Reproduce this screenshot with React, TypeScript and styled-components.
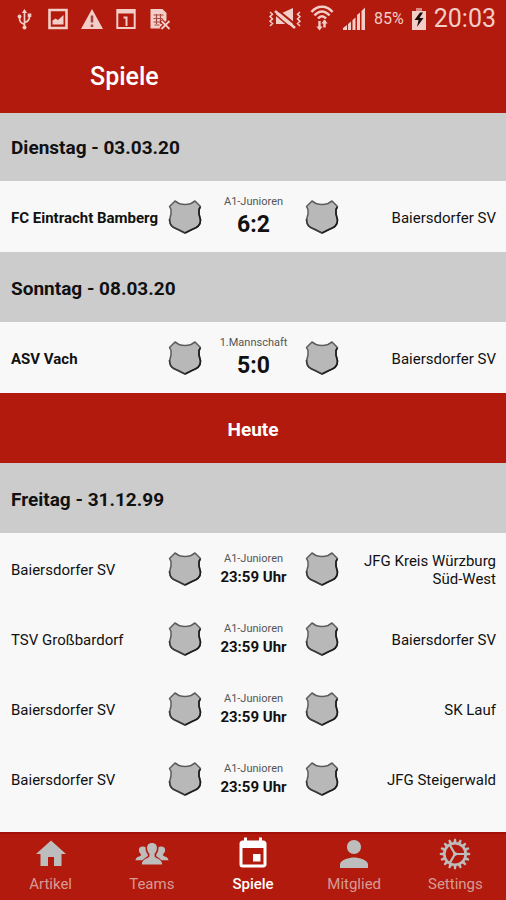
import React from 'react';
import styled, { createGlobalStyle } from 'styled-components';
import { MdHome, MdEvent, MdPerson } from 'react-icons/md';

const RED = '#b11a0c';
const STATUS = '#f3cdc8';

const GlobalStyle = createGlobalStyle`
  * { box-sizing: border-box; }
  body { margin: 0; background: #f8f8f8; font-family: Roboto, sans-serif; color: #111; }
  h1, h2, p { margin: 0; }
`;

const Screen = styled.div`
  display: flex;
  flex-direction: column;
  min-height: 100vh;
`;

const Top = styled.header`
  position: relative;
  z-index: 1;
  background: ${RED};
`;

const StatusBar = styled.div`
  display: flex;
  justify-content: space-between;
  align-items: center;
  height: 38px;
  padding: 0 10px 0 12px;
  color: ${STATUS};
`;

const StatusGroup = styled.div<{ $gap: number }>`
  display: flex;
  align-items: center;
  gap: ${(p) => p.$gap}px;
  svg { display: block; flex: none; }
`;

const Percent = styled.span`
  font-size: 16px;
  line-height: 20px;
`;

const Clock = styled.span`
  font-size: 25px;
  line-height: 38px;
`;

const Title = styled.h1`
  padding: 2px 90px 0;
  font-size: 25px;
  font-weight: 500;
  line-height: 73px;
  color: #fff;
`;

const List = styled.main`
  flex: 1;
  margin-top: -2px;
`;

const DayHeading = styled.h2`
  display: flex;
  align-items: center;
  min-height: 70px;
  padding: 2px 11px 0;
  background: #ccc;
  font-size: 19px;
  font-weight: 700;
`;

const TodayBar = styled.div`
  display: flex;
  align-items: center;
  justify-content: center;
  min-height: 70px;
  padding-top: 2px;
  background: ${RED};
  color: #fff;
  font-size: 19px;
  font-weight: 700;
`;

const Fixtures = styled.div`
  padding-top: 1px;
`;

const Match = styled.article`
  display: grid;
  grid-template-columns: 1fr 34px 103px 34px 1fr;
  align-items: center;
  min-height: 70px;
  padding: 0 10px 0 11px;
  svg { display: block; }
`;

const Team = styled.p<{ $away?: boolean; $winner?: boolean }>`
  font-size: 15px;
  line-height: 18px;
  font-weight: ${(p) => (p.$winner ? 700 : 400)};
  text-align: ${(p) => (p.$away ? 'right' : 'left')};
  padding-top: 2px;
`;

const Middle = styled.div`
  text-align: center;
`;

const League = styled.p`
  font-size: 11px;
  line-height: 16px;
  color: #555;
`;

const Result = styled.p<{ $time?: boolean }>`
  font-size: ${(p) => (p.$time ? 15 : 23)}px;
  line-height: ${(p) => (p.$time ? 20 : 30)}px;
  font-weight: 700;
`;

const TabBar = styled.nav`
  display: grid;
  grid-template-columns: repeat(5, 1fr);
  height: 68px;
  border-top: 2px solid #a3100a;
  background: ${RED};
`;

const Tab = styled.a<{ $active?: boolean }>`
  display: flex;
  flex-direction: column;
  align-items: center;
  color: ${(p) => (p.$active ? '#fff' : '#d79a95')};
  font-size: 15px;
  line-height: 20px;
  font-weight: ${(p) => (p.$active ? 500 : 400)};
  text-decoration: none;
`;

const TabIcon = styled.span<{ $active?: boolean }>`
  display: flex;
  align-items: center;
  justify-content: center;
  height: 40px;
  color: ${(p) => (p.$active ? '#fff' : '#bdbdbd')};
  svg { display: block; flex: none; }
`;

const Shield = () => (
  <svg width="34" height="34" viewBox="0 0 34 34" aria-hidden="true">
    <path
      d="M7 1L11 3.500C15 4.800 19 4.800 23 3.500L27 1L32.500 6.500L31 9.500L31 14L32.500 20C32.500 26 29 27.500 24 29.500L17 33L10 29.500C5 27.500 1.500 26 1.500 20L3 14L3 9.500L1.500 6.500Z"
      fill="#b8b8b8"
      stroke="#5c5c5c"
      strokeWidth="1.500"
      strokeLinejoin="round"
    />
    <path d="M32.300 7L31 9.500L31 14L32.500 20C32.500 26 29 27.500 24 29.500L17 33" fill="none" stroke="#1d1d1d" strokeWidth="1.700" />
    <path d="M1.500 19C1.500 26 5 27.500 10 29.500L17 33" fill="none" stroke="#3a3a3a" strokeWidth="1.500" />
  </svg>
);

const UsbIcon = () => (
  <svg width="24" height="24" viewBox="0 0 24 24" fill="none" stroke="currentColor" strokeWidth="1.700" aria-hidden="true">
    <path d="M12.500 5v15M12.500 17.500C8 16 7.500 14 7.500 10M12.500 15.500C17 14.500 17.500 12 17.500 9" />
    <path d="M9.800 6l2.700-4 2.700 4z" fill="currentColor" stroke="none" />
    <circle cx="12.500" cy="20.500" r="2" fill="currentColor" stroke="none" />
    <circle cx="7.500" cy="9.500" r="1.900" fill="currentColor" stroke="none" />
    <path d="M15.700 6.500h3.600v3.600h-3.600z" fill="currentColor" stroke="none" />
  </svg>
);

const PictureIcon = () => (
  <svg width="24" height="24" viewBox="0 0 24 24" fill="none" aria-hidden="true">
    <path d="M3.500 3h17v18h-17z" stroke="currentColor" strokeWidth="2.600" />
    <path d="M6.500 17.500v-4l3-2 2.500 1.500 5.500-5v9.500z" fill="currentColor" />
  </svg>
);

const WarningIcon = () => (
  <svg width="24" height="24" viewBox="0 0 24 24" aria-hidden="true">
    <path d="M12 2L23 22H1z" fill="currentColor" />
    <path d="M12 8.500v7M12 17.500v2.500" stroke="#a0443c" strokeWidth="2.500" />
  </svg>
);

const CalendarOneIcon = () => (
  <svg width="24" height="24" viewBox="0 0 24 24" fill="none" stroke="currentColor" aria-hidden="true">
    <path d="M3.300 3h17.400v18H3.300z" strokeWidth="2" />
    <path d="M3 4.500h18" strokeWidth="4" />
    <path d="M9.500 10.500h3V19" strokeWidth="2" />
  </svg>
);

const FileErrorIcon = () => (
  <svg width="24" height="24" viewBox="0 0 24 24" fill="none" aria-hidden="true">
    <path d="M2.500 2h12l4 4v8l-5 7.500h-11z" fill="currentColor" />
    <path d="M5.500 8h10M5.500 11.500h9M5.500 15h7M6.500 18h5M8.500 7v10M12.500 7v10" stroke="#a84a42" strokeWidth="1.200" />
    <path d="M13 13.500l8.500 8.500M21.500 13.500L13 22" stroke={RED} strokeWidth="4" />
    <path d="M13.500 14l8 8M21.500 14l-8 8" stroke="currentColor" strokeWidth="1.800" />
  </svg>
);

const MuteIcon = () => (
  <svg width="34" height="24" viewBox="0 0 34 24" fill="none" stroke="currentColor" aria-hidden="true">
    <path d="M2 5l2.500 2.300L2 9.600l2.500 2.300L2 14.200l2.500 2.300L2 19M32 5l-2.500 2.300L32 9.600l-2.500 2.300 2.500 2.300-2.500 2.300L32 19" strokeWidth="1.500" />
    <path d="M8 6h6l11-5v18l-7-2H8z" fill="currentColor" stroke="none" />
    <path d="M9 2.500l19 15.500" stroke={RED} strokeWidth="2.200" />
    <path d="M7 4l20 17" strokeWidth="2.600" />
    <path d="M6 6.500l17 14.500" stroke={RED} strokeWidth="1.600" />
  </svg>
);

const WifiIcon = () => (
  <svg width="24" height="28" viewBox="0 0 24 28" fill="none" stroke="currentColor" aria-hidden="true">
    <path d="M1.500 7C7 0 17 0 22.500 7M4.500 10.500C9 5 15 5 19.500 10.500M8 13.500C10.500 10.500 13.500 10.500 16 13.500" strokeWidth="2.500" />
    <path d="M9.500 16v8M14.500 15.500v7" strokeWidth="2.400" />
    <path d="M6.300 21.500h6.400l-3.200 4zM11.300 18.500h6.400l-3.200-4z" fill="currentColor" stroke="none" />
  </svg>
);

const SignalIcon = () => (
  <svg width="24" height="24" viewBox="0 0 24 24" fill="currentColor" aria-hidden="true">
    <path d="M1 23v-2l4-3v5zM6 23v-6l3-2.500V23zM10.500 23V13l3-2.500V23zM15 23V8l3-2.500V23zM19.500 23V4L23 .5V23z" />
  </svg>
);

const BatteryIcon = () => (
  <svg width="14" height="24" viewBox="0 0 14 24" aria-hidden="true">
    <path d="M4 1h6v3H4z" fill="#d9877f" />
    <path d="M0 4h14v19H0z" fill="currentColor" />
    <path d="M8 5.500L2.500 13h4l-1.500 7 6.500-9H7.500L11 5.500z" fill="#1c0c0a" />
  </svg>
);

const TeamsIcon = () => (
  <svg width="34" height="34" viewBox="0 0 34 34" fill="currentColor" aria-hidden="true">
    <path d="M17 6c3.600 0 5.200 2.300 4.900 5.600-.2 2.600-1.200 4-2.300 5.200v2.400c0 2.200 7.600 2 7.600 8.300H6.800c0-6.300 7.600-6.100 7.600-8.300v-2.400c-1.100-1.200-2.100-2.600-2.300-5.200C11.800 8.300 13.400 6 17 6z" />
    <path d="M8 9.500c1 0 2 .3 2.600.8-.3 3.200.8 5.500 2.200 7.300v1.600c-1 .8-3.500 1.500-5.200 4.100H.5c.3-4 5.400-3.500 5.400-5v-1.200C4.500 15.800 4 14.800 3.900 13.200c-.2-2.200 1.200-3.700 4.100-3.700z" />
    <path d="M26 9.500c-1 0-2 .3-2.600.8.3 3.200-.8 5.500-2.200 7.300v1.600c1 .8 3.500 1.500 5.200 4.100h7.100c-.3-4-5.400-3.500-5.400-5v-1.200c1.400-1.300 1.900-2.300 2-3.900.2-2.200-1.200-3.700-4.100-3.700z" />
  </svg>
);

const TEETH = Array.from({ length: 16 }, (_, i) => i * 22.5);

const GearIcon = () => (
  <svg width="32" height="32" viewBox="-16 -16 32 32" fill="none" stroke="currentColor" aria-hidden="true">
    <circle r="10.700" strokeWidth="2.600" />
    {TEETH.map((a) => (
      <path key={a} d="M-1.600 -11.500L-.9 -15.200H.9L1.600 -11.500Z" fill="currentColor" stroke="none" transform={`rotate(${a})`} />
    ))}
    <path d="M0 0H10.500M0 0L-5.300 -9.100M0 0L-5.300 9.100" strokeWidth="2.200" />
    <circle r="2" fill="currentColor" stroke="none" />
  </svg>
);

type Fixture = { home: string; away: string; league: string; result: string; played?: boolean };
type MatchDay = { day: string; fixtures: Fixture[] };

const UHR = '23:59 Uhr';
const past: MatchDay[] = [
  { day: 'Dienstag - 03.03.20', fixtures: [{ home: 'FC Eintracht Bamberg', away: 'Baiersdorfer SV', league: 'A1-Junioren', result: '6:2', played: true }] },
  { day: 'Sonntag - 08.03.20', fixtures: [{ home: 'ASV Vach', away: 'Baiersdorfer SV', league: '1.Mannschaft', result: '5:0', played: true }] },
];
const upcoming: MatchDay[] = [
  {
    day: 'Freitag - 31.12.99',
    fixtures: [
      { home: 'Baiersdorfer SV', away: 'JFG Kreis Würzburg Süd-West', league: 'A1-Junioren', result: UHR },
      { home: 'TSV Großbardorf', away: 'Baiersdorfer SV', league: 'A1-Junioren', result: UHR },
      { home: 'Baiersdorfer SV', away: 'SK Lauf', league: 'A1-Junioren', result: UHR },
      { home: 'Baiersdorfer SV', away: 'JFG Steigerwald', league: 'A1-Junioren', result: UHR },
    ],
  },
];

const tabs = [
  { label: 'Artikel', icon: <MdHome size={36} /> },
  { label: 'Teams', icon: <TeamsIcon /> },
  { label: 'Spiele', icon: <MdEvent size={36} />, active: true },
  { label: 'Mitglied', icon: <MdPerson size={42} /> },
  { label: 'Settings', icon: <GearIcon /> },
];

const Day = ({ day, fixtures }: MatchDay) => (
  <section>
    <DayHeading>{day}</DayHeading>
    <Fixtures>
      {fixtures.map((f, i) => (
        <Match key={i}>
          <Team $winner={f.played}>{f.home}</Team>
          <Shield />
          <Middle>
            <League>{f.league}</League>
            <Result $time={!f.played}>{f.result}</Result>
          </Middle>
          <Shield />
          <Team $away>{f.away}</Team>
        </Match>
      ))}
    </Fixtures>
  </section>
);

export default function App() {
  return (
    <Screen>
      <GlobalStyle />
      <Top>
        <StatusBar>
          <StatusGroup $gap={10}>
            <UsbIcon />
            <PictureIcon />
            <WarningIcon />
            <CalendarOneIcon />
            <FileErrorIcon />
          </StatusGroup>
          <StatusGroup $gap={8}>
            <MuteIcon />
            <WifiIcon />
            <SignalIcon />
            <Percent>85%</Percent>
            <BatteryIcon />
            <Clock>20:03</Clock>
          </StatusGroup>
        </StatusBar>
        <Title>Spiele</Title>
      </Top>
      <List>
        {past.map((d) => <Day key={d.day} {...d} />)}
        <TodayBar>Heute</TodayBar>
        {upcoming.map((d) => <Day key={d.day} {...d} />)}
      </List>
      <TabBar>
        {tabs.map((t) => (
          <Tab key={t.label} href={`#${t.label.toLowerCase()}`} $active={t.active} aria-current={t.active ? 'page' : undefined}>
            <TabIcon $active={t.active}>{t.icon}</TabIcon>
            {t.label}
          </Tab>
        ))}
      </TabBar>
    </Screen>
  );
}
